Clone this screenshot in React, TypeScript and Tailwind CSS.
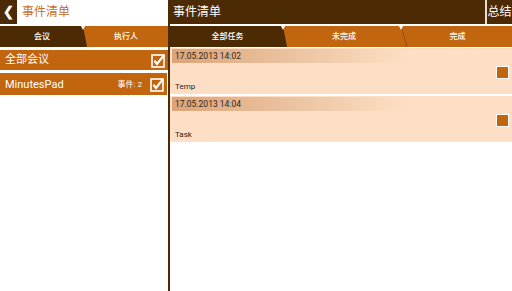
import React from "react";

const DARK = "bg-[#4b2a04]";

function CheckBox() {
  return (
    <svg width="14" height="14" viewBox="0 0 14 14" className="shrink-0">
      <rect x="1" y="1" width="12" height="12" fill="#c1650f" stroke="#ffffff" strokeWidth="1.6" />
      <path d="M3.4 6.8 L6 10 L12.6 1.6" fill="none" stroke="#ffffff" strokeWidth="2.2" />
    </svg>
  );
}

function TaskItem({ date, title }: { date: string; title: string }) {
  return (
    <div className="h-[46px] bg-[#fedfc5] flex flex-col pl-[2px] pr-[3px] pt-[1px]">
      <div className="h-[14px] w-[238px] bg-gradient-to-r from-[#dca478] via-[#ebc3a0] to-[#fedfc5] flex items-center pl-[3px] text-[8.5px] text-[#33261a]">
        {date}
      </div>
      <div className="flex-1 flex items-end justify-between pb-[1px] pl-[3px]">
        <span className="text-[8px] text-[#2a2018]">{title}</span>
        <span className="w-[13px] h-[13px] border border-white bg-[#c1650f] mb-[14px]" />
      </div>
    </div>
  );
}

export default function App() {
  return (
    <div className="flex w-[512px] h-[291px] bg-white overflow-hidden font-['Roboto','Noto_Sans_CJK_SC',sans-serif]">
      {/* left panel */}
      <div className="w-[168px] flex flex-col">
        <div className="h-[24px] flex items-center">
          <div className={`w-[17px] h-full ${DARK} flex items-center justify-center text-white text-[13px] font-bold`}>❮</div>
          <span className="ml-[5px] text-[12px] text-[#c46f2a]">事件清单</span>
        </div>
        <div className="h-[2px]" />
        <div className="h-[21px] relative flex bg-[#c1650f] text-white text-[8px] font-medium">
          <div className={`absolute inset-y-0 left-0 w-[87px] ${DARK} [clip-path:polygon(0_0,83px_0,87px_100%,0_100%)]`} />
          <div className="relative w-[84px] flex items-center justify-center">会议</div>
          <div className="relative flex-1 flex items-center justify-center">执行人</div>
          <div className="absolute top-0 left-[81px] w-0 h-0 border-x-[2px] border-x-transparent border-t-[4px] border-t-white" />
        </div>
        <div className="h-[3px]" />
        <div className="h-[20px] bg-[#c1650f] flex items-center justify-between pl-[5px] pr-[3px] pt-[1px] text-white text-[11px]">
          <span>全部会议</span>
          <CheckBox />
        </div>
        <div className="h-[3px]" />
        <div className="h-[22px] bg-[#c1650f] flex items-center pl-[5px] pr-[3px] pt-[2px] mr-[1px] text-white text-[11px]">
          <span className="flex-1">MinutesPad</span>
          <span className="text-[8px] mr-[8px]">事件: 2</span>
          <CheckBox />
        </div>
      </div>

      <div className={`w-[2px] h-full ${DARK}`} />

      {/* right panel */}
      <div className="flex-1 flex flex-col">
        <div className={`h-[24px] flex ${DARK} text-white`}>
          <span className="flex-1 flex items-center pl-[3px] text-[12px]">事件清单</span>
          <div className="w-[2px] bg-[#e8dccf]" />
          <span className="w-[25px] flex items-center justify-center text-[12px]">总结</span>
        </div>
        <div className="h-[2px]" />
        <div className="h-[21px] relative flex bg-[#c1650f] text-white text-[8px] font-medium">
          <div className={`absolute inset-y-0 left-0 w-[117px] ${DARK} [clip-path:polygon(0_0,113px_0,117px_100%,0_100%)]`} />
          <svg className="absolute inset-0" width="342" height="21">
            <line x1="231" y1="0" x2="237" y2="21" stroke="#9a4e0c" strokeWidth="1" />
          </svg>
          <div className="absolute top-0 left-[111px] w-0 h-0 border-x-[2px] border-x-transparent border-t-[4px] border-t-white" />
          <div className="absolute top-0 left-[229px] w-0 h-0 border-x-[2px] border-x-transparent border-t-[4px] border-t-white" />
          <div className="relative w-[115px] flex items-center justify-center">全部任务</div>
          <div className="relative w-[118px] flex items-center justify-center">未完成</div>
          <div className="relative flex-1 flex items-center justify-center">完成</div>
        </div>
        <div className="h-[1px]" />
        <TaskItem date="17.05.2013 14:02" title="Temp" />
        <div className="h-[2px]" />
        <TaskItem date="17.05.2013 14:04" title="Task" />
      </div>
    </div>
  );
}
